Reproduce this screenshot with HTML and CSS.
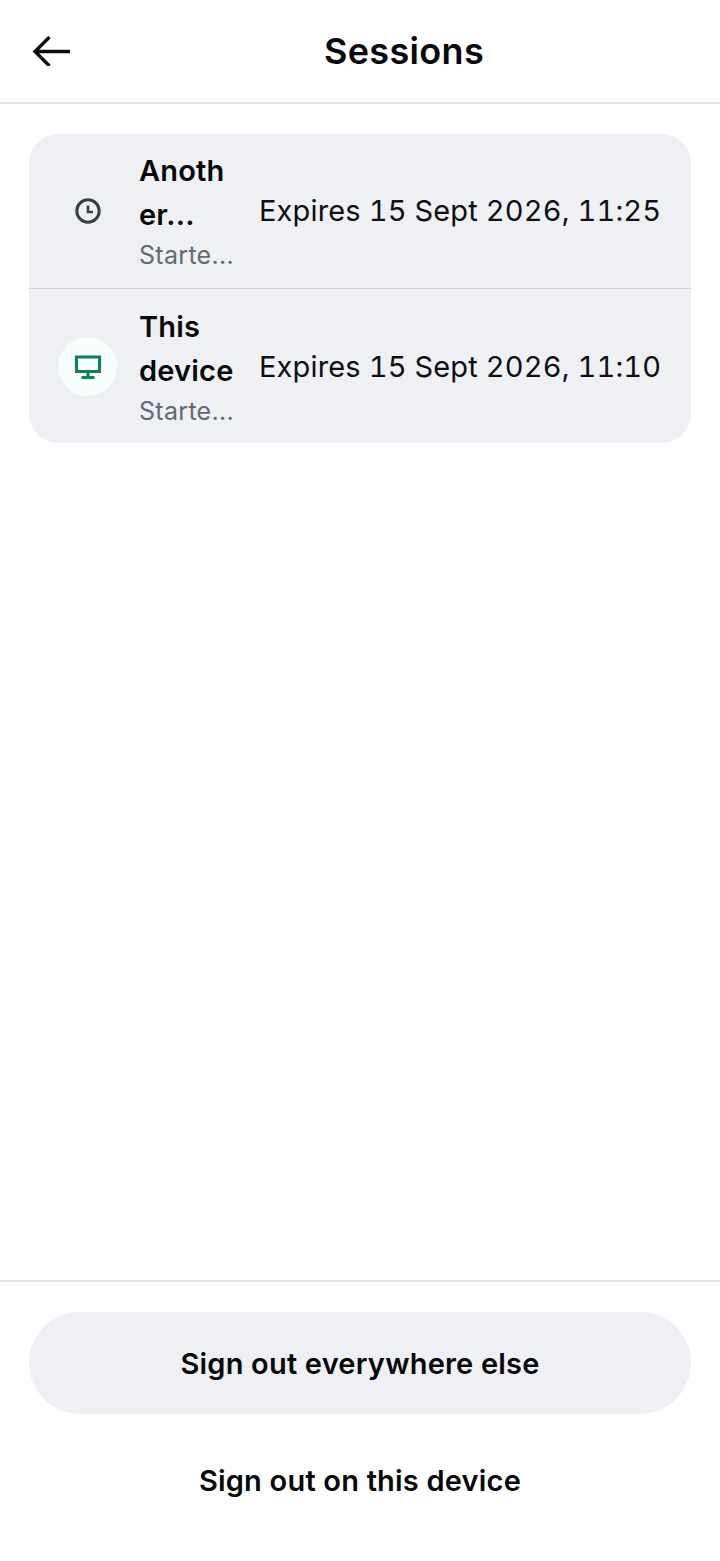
FILE: index.html
```html
<!DOCTYPE html>
<html lang="en">
<head>
<meta charset="utf-8">
<title>Sessions</title>
<link rel="stylesheet" href="styles.css">
</head>
<body>
<div class="app">
  <header class="header">
    <button class="back" aria-label="Back">
      <svg viewBox="0 0 40 30" width="40" height="30"><path d="M38 15.500H3M17.500 1 3 15.500 17.500 30" fill="none" stroke="#0b0d10" stroke-width="3.400"/></svg>
    </button>
    <h1 class="title">Sessions</h1>
  </header>
  <main class="main">
    <section class="list">
      <div class="row">
        <div class="icon">
          <svg viewBox="0 0 26 26" width="26" height="26"><circle cx="13" cy="13" r="11.200" fill="none" stroke="#3a3e45" stroke-width="3"/><path d="M13 7.500V14H18" fill="none" stroke="#3a3e45" stroke-width="2.600"/></svg>
        </div>
        <div class="info">
          <div class="name">Anoth<br>er...</div>
          <div class="started">Starte...</div>
        </div>
        <div class="expires">Expires 15 Sept 2026, 11:25</div>
      </div>
      <div class="row row-second">
        <div class="icon icon-current">
          <svg viewBox="0 0 26 24" width="26" height="24"><path d="M1.500 2h23v14.500h-23z" fill="none" stroke="#0a8454" stroke-width="3"/><path d="M13 17v5M6.500 22.500h13" fill="none" stroke="#0a8454" stroke-width="3"/></svg>
        </div>
        <div class="info">
          <div class="name">This<br>device</div>
          <div class="started">Starte...</div>
        </div>
        <div class="expires">Expires 15 Sept 2026, 11:10</div>
      </div>
    </section>
  </main>
  <footer class="footer">
    <button class="btn btn-filled">Sign out everywhere else</button>
    <button class="btn">Sign out on this device</button>
  </footer>
</div>
</body>
</html>
```
FILE: styles.css
```css
* { box-sizing: border-box; }
html, body { margin: 0; padding: 0; height: 100%; }
body { background: #fff; color: #08090b; font-family: Inter, "Liberation Sans", sans-serif; }
.app { height: 1561px; display: flex; flex-direction: column; }
.header { height: 104px; flex: none; display: flex; align-items: center; border-bottom: 2px solid #e1e3e6; padding: 0 0 0 32px; }
.back { background: none; border: 0; padding: 0; display: flex; }
.title { margin: 0; flex: 1; text-align: center; font-size: 36px; line-height: 44px; font-weight: 600; letter-spacing: 0.35px; padding-left: 16px; }
.main { flex: 1; padding: 30px 29px; }
.list { background: #eef0f3; border-radius: 29px; overflow: hidden; }
.row { height: 154px; display: flex; align-items: center; padding: 0 30px 0 29px; gap: 22px; }
.row-second { height: 155px; border-top: 1px solid #cdd0d5; padding-top: 1px; }
.icon { width: 59px; height: 59px; border-radius: 50%; flex: none; display: flex; align-items: center; justify-content: center; }
.icon-current { background: #f6fdfa; }
.info { width: 98px; flex: none; }
.name { font-size: 29px; line-height: 44px; font-weight: 600; letter-spacing: 0.2px; }
.started { font-size: 25px; line-height: 36px; letter-spacing: 0.3px; color: #646a73; }
.expires { flex: 1; text-align: right; white-space: nowrap; font-size: 29px; line-height: 44px; letter-spacing: 0.15px; font-variant-numeric: tabular-nums; color: #0e1013; }
.footer { flex: none; height: 281px; border-top: 2px solid #e1e3e6; padding: 30px 29px 0; display: flex; flex-direction: column; }
.btn { height: 102px; flex: none; border: 0; background: none; border-radius: 51px; font: 600 29px/44px Inter, "Liberation Sans", sans-serif; letter-spacing: 0.2px; color: #08090b; padding: 2px 0 0; }
.btn-filled { background: #eef0f3; margin-bottom: 16px; }
.btn:last-child { padding: 0; }
```
